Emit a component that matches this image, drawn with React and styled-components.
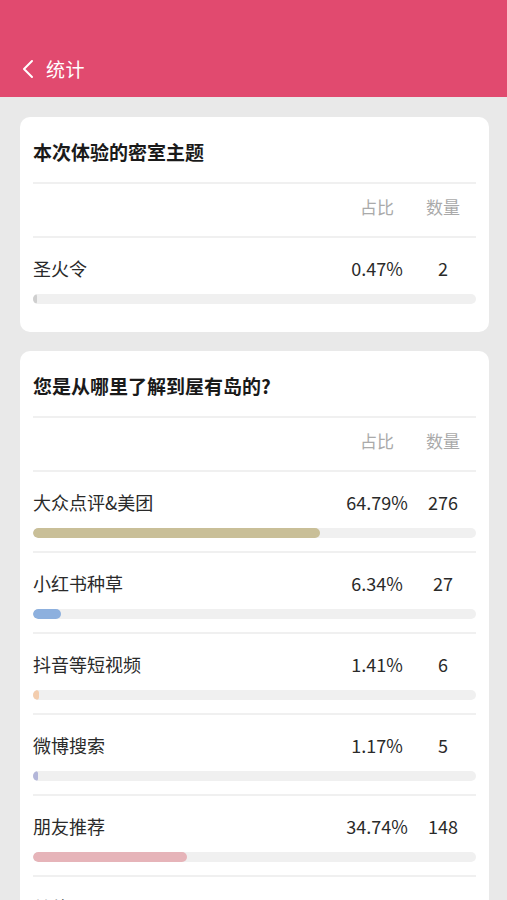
import styled, { createGlobalStyle } from "styled-components";

const GlobalStyle = createGlobalStyle`
  body {
    margin: 0;
    background: #E9E9E9;
    font-family: "Noto Sans CJK SC", "Noto Sans", sans-serif;
  }
  * { box-sizing: border-box; }
`

const Page = styled.div`
  width: 100%;
  min-height: 900px;
  background: #E9E9E9;
`

const Header = styled.div`
  height: 97px;
  background: #E14A6F;
  display: flex;
  align-items: flex-end;
  padding: 0 0 15px 22px;
  color: #fff;
`

const Back = styled.div`
  display: flex;
  align-items: center;
  gap: 12px;
  font-size: 19px;
  line-height: 26px;
  letter-spacing: 0.5px;
`

const Content = styled.div`
  display: flex;
  flex-direction: column;
  gap: 19px;
  padding: 20px 18px 20px 20px;
`

const Card = styled.div`
  background: #fff;
  border-radius: 10px;
  padding: 0 13px 15px;
`

const Title = styled.div`
  height: 67px;
  padding-top: 22px;
  font-size: 19px;
  line-height: 26px;
  font-weight: bold;
  color: #1a1a1a;
  border-bottom: 2px solid #F0F0F0;
`

const Row = styled.div`
  display: flex;
  align-items: center;
  height: 24px;
  line-height: 24px;
`

const Label = styled.div`
  flex: 1;
  font-size: 18px;
  color: #2a2a2a;
`

const Col = styled.div`
  width: 66px;
  text-align: center;
  font-size: ${p => (p.$head ? "17px" : "18px")};
  color: ${p => (p.$head ? "#AAAAAA" : "#2a2a2a")};
  white-space: nowrap;
`

const HeadRow = styled.div`
  height: 54px;
  padding-top: 11px;
  border-bottom: 2px solid #F0F0F0;
`

const Item = styled.div`
  padding: 18px 0 13px;
  border-bottom: 2px solid #F0F0F0;
  &:last-child {
    border-bottom: none;
  }
`

const Track = styled.div`
  margin-top: 14px;
  height: 10px;
  border-radius: 5px;
  background: #F0F0F0;
  overflow: hidden;
`

const Fill = styled.div`
  height: 100%;
  border-radius: 5px;
  background: ${p => p.$color};
  min-width: 4px;
`

const Chevron = () => (
  <svg width="12" height="20" viewBox="0 0 12 20" fill="none">
    <path d="M10 2 L2 10 L10 18" stroke="#fff" strokeWidth="2" strokeLinecap="round" strokeLinejoin="round" />
  </svg>
)

const sections = [
  {
    title: "本次体验的密室主题",
    rows: [{ name: "圣火令", pct: 0.47, count: 2, color: "#CFCFCF" }],
  },
  {
    title: "您是从哪里了解到屋有岛的?",
    rows: [
      { name: "大众点评&美团", pct: 64.79, count: 276, color: "#C9BF98" },
      { name: "小红书种草", pct: 6.34, count: 27, color: "#8DB0DE" },
      { name: "抖音等短视频", pct: 1.41, count: 6, color: "#F3CDAE" },
      { name: "微博搜索", pct: 1.17, count: 5, color: "#B3B6D9" },
      { name: "朋友推荐", pct: 34.74, count: 148, color: "#E6B4B9" },
      { name: "其他", pct: 2.11, count: 9, color: "#B9D8C2" },
    ],
  },
]

const App = () => {
  return (
    <Page>
      <GlobalStyle />
      <Header>
        <Back>
          <Chevron />
          统计
        </Back>
      </Header>
      <Content>
        {sections.map(s => (
          <Card key={s.title}>
            <Title>{s.title}</Title>
            <HeadRow>
              <Row>
                <Label />
                <Col $head>占比</Col>
                <Col $head>数量</Col>
              </Row>
            </HeadRow>
            {s.rows.map(r => (
              <Item key={r.name}>
                <Row>
                  <Label>{r.name}</Label>
                  <Col>{r.pct.toFixed(2)}%</Col>
                  <Col>{r.count}</Col>
                </Row>
                <Track>
                  <Fill $color={r.color} style={{ width: `${r.pct}%` }} />
                </Track>
              </Item>
            ))}
          </Card>
        ))}
      </Content>
    </Page>
  )
}

export default App;
